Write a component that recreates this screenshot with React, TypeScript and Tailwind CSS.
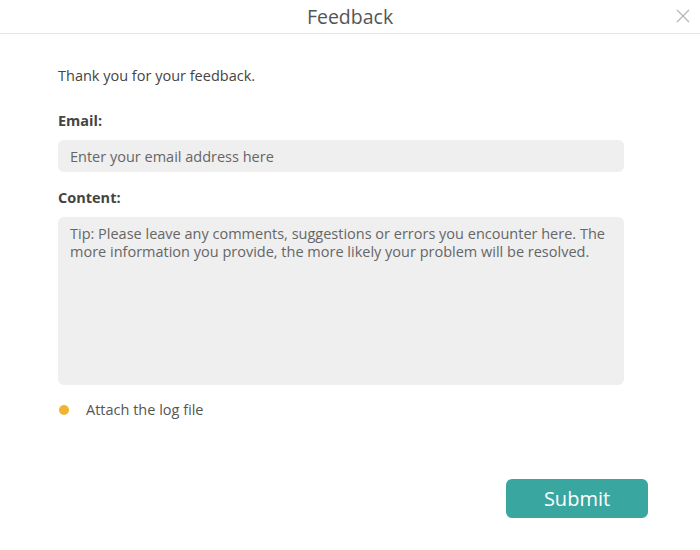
import React from "react";

const App: React.FC = () => {
  return (
    <div className="w-[700px] h-[550px] bg-white flex flex-col font-['Open_Sans','Noto_Sans',sans-serif] text-[#444]">
      {/* Header */}
      <div className="relative h-[34px] shrink-0 border-b border-[#e6e6e6] flex items-center justify-center">
        <h1 className="text-[19.5px] text-[#555] leading-none">Feedback</h1>
        <button className="absolute right-[10px] top-[9px] text-[#b5b5b5]">
          <svg width="14" height="14" viewBox="0 0 14 14" fill="none" stroke="currentColor" strokeWidth="1.2">
            <path d="M1 1L13 13M13 1L1 13" />
          </svg>
        </button>
      </div>

      {/* Body */}
      <div className="flex flex-col px-[58px] pr-[76px] pt-[32px]">
        <p className="text-[14.5px] leading-[20px]">Thank you for your feedback.</p>

        <label className="mt-[25px] text-[14.5px] font-bold leading-[20px]">Email:</label>
        <input
          className="mt-[9px] h-[32px] rounded-md bg-[#efefef] px-3 text-[14.5px] outline-none placeholder:text-[#666]"
          placeholder="Enter your email address here"
        />

        <label className="mt-[16px] text-[14.5px] font-bold leading-[20px]">Content: </label>
        <textarea
          className="mt-[9px] h-[168px] resize-none rounded-md bg-[#efefef] px-3 pt-[8px] text-[14.5px] leading-[18px] outline-none placeholder:text-[#666]"
          placeholder="Tip: Please leave any comments, suggestions or errors you encounter here. The more information you provide, the more likely your problem will be resolved."
        />

        <div className="mt-[15px] flex items-center gap-[17px]">
          <span className="ml-[1px] h-[10px] w-[10px] rounded-full bg-[#f0b433]" />
          <span className="text-[14.5px] text-[#555] leading-[20px]">Attach the log file</span>
        </div>

        <div className="mt-[59px] flex justify-end mr-[-24px]">
          <button className="h-[39px] w-[142px] rounded-md bg-[#3aa6a0] text-[20px] text-white">Submit</button>
        </div>
      </div>
    </div>
  );
};

export default App;
